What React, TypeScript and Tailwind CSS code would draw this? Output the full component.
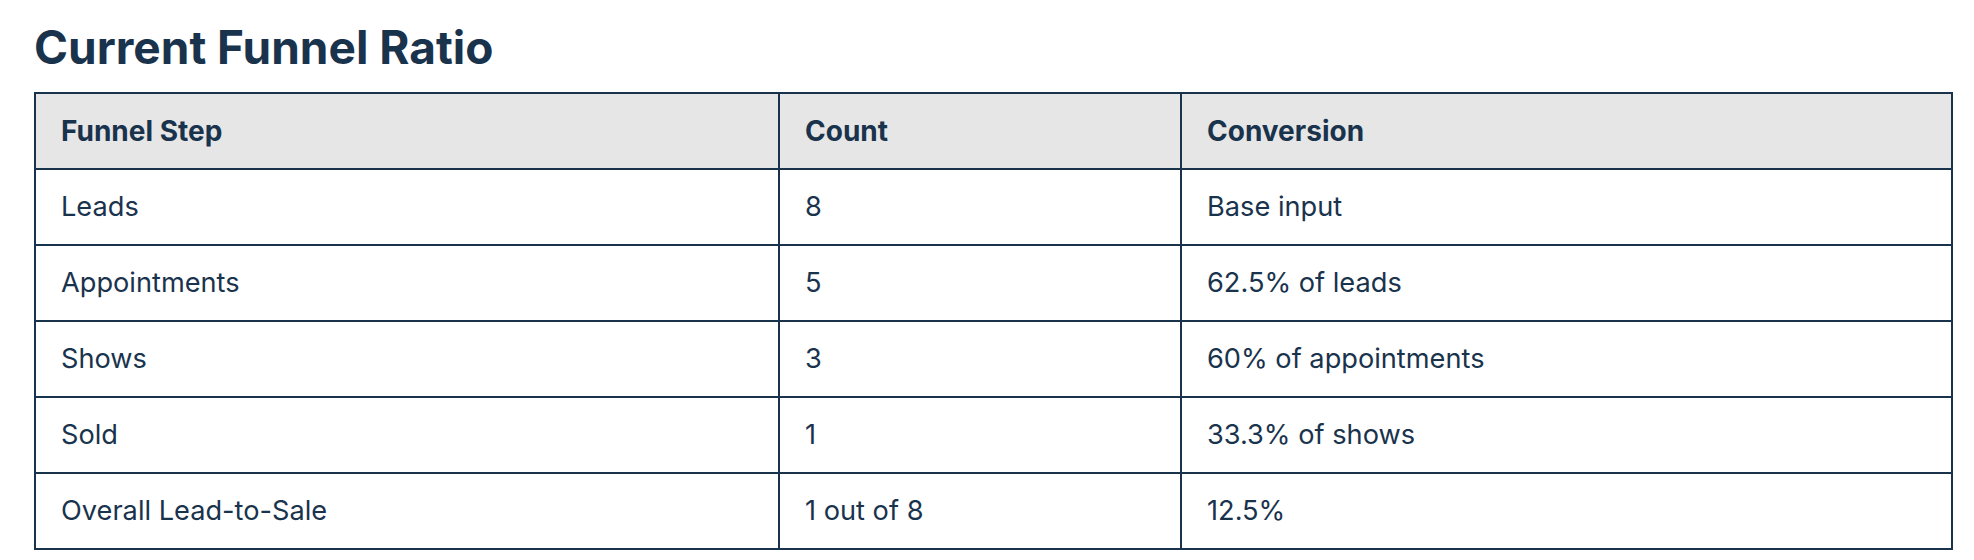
const rows = [
  { step: "Leads", count: "8", conversion: "Base input" },
  { step: "Appointments", count: "5", conversion: "62.5% of leads" },
  { step: "Shows", count: "3", conversion: "60% of appointments" },
  { step: "Sold", count: "1", conversion: "33.3% of shows" },
  { step: "Overall Lead-to-Sale", count: "1 out of 8", conversion: "12.5%" },
];

export default function App() {
  return (
    <div
      className="min-h-[560px] bg-white pt-5 pl-[34px] pr-[21px] text-[#1a334d]"
      style={{ fontFamily: "Inter, 'Noto Sans', sans-serif" }}
    >
      <h1 className="text-[46px] font-bold leading-[55px]">Current Funnel Ratio</h1>

      <table className="mt-[17px] w-full table-fixed border-collapse border-2 border-[#1a334d] text-[27.2px]">
        <colgroup>
          <col className="w-[744px]" />
          <col className="w-[402px]" />
          <col />
        </colgroup>
        <thead>
          <tr className="bg-[#e6e6e6] text-[28px]">
            <th className="h-[76px] border-2 border-[#1a334d] px-[25px] text-left font-bold">Funnel Step</th>
            <th className="h-[76px] border-2 border-[#1a334d] px-[25px] text-left font-bold">Count</th>
            <th className="h-[76px] border-2 border-[#1a334d] px-[25px] text-left font-bold">Conversion</th>
          </tr>
        </thead>
        <tbody>
          {rows.map((r) => (
            <tr key={r.step}>
              <td className="h-[76px] border-2 border-[#1a334d] px-[25px]">{r.step}</td>
              <td className="h-[76px] border-2 border-[#1a334d] px-[25px]">{r.count}</td>
              <td className="h-[76px] border-2 border-[#1a334d] px-[25px]">{r.conversion}</td>
            </tr>
          ))}
        </tbody>
      </table>
    </div>
  );
}
